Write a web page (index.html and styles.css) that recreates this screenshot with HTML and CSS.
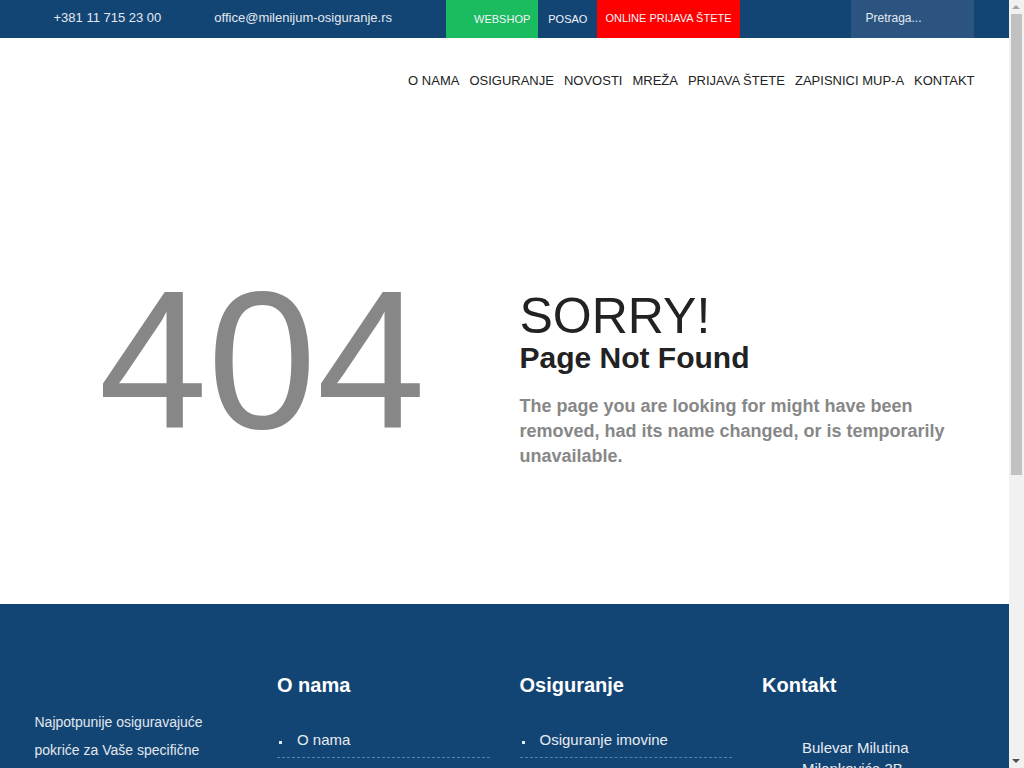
FILE: index.html
```
<!DOCTYPE html>
<html lang="sr">
<head>
<meta charset="utf-8">
<title>404 - Milenijum osiguranje</title>
<link rel="stylesheet" href="styles.css">
</head>
<body>
<div class="topbar">
  <div class="container topbar-inner">
    <span class="phone">+381 11 715 23 00</span>
    <span class="email">office@milenijum-osiguranje.rs</span>
    <a class="tb-btn webshop" href="#">WEBSHOP</a>
    <a class="tb-btn posao" href="#">POSAO</a>
    <a class="tb-btn prijava" href="#">ONLINE PRIJAVA ŠTETE</a>
    <div class="search">Pretraga...</div>
  </div>
</div>
<header class="header">
  <nav class="container nav">
    <a href="#">O NAMA</a>
    <a href="#">OSIGURANJE</a>
    <a href="#">NOVOSTI</a>
    <a href="#">MREŽA</a>
    <a href="#">PRIJAVA ŠTETE</a>
    <a href="#">ZAPISNICI MUP-A</a>
    <a href="#">KONTAKT</a>
  </nav>
</header>
<main class="container">
  <div class="error-row">
    <div class="col-half code">404</div>
    <div class="col-half message">
      <h1 class="sorry">SORRY!</h1>
      <h2 class="notfound">Page Not Found</h2>
      <p class="desc">The page you are looking for might have been removed, had its name changed, or is temporarily unavailable.</p>
    </div>
  </div>
</main>
<footer class="footer">
  <div class="container">
    <div class="footer-row">
      <div class="fcol about">
        <p>Najpotpunije osiguravajuće pokriće za Vaše specifične potrebe.</p>
      </div>
      <div class="fcol">
        <h3>O nama</h3>
        <ul class="flist">
          <li>O nama</li>
          <li>Menadžment</li>
          <li>Finansijski izveštaji</li>
          <li>Novosti</li>
          <li>Kontakt</li>
        </ul>
      </div>
      <div class="fcol">
        <h3>Osiguranje</h3>
        <ul class="flist">
          <li>Osiguranje imovine</li>
          <li>Osiguranje lica</li>
          <li>Osiguranje vozila</li>
          <li>Putno osiguranje</li>
          <li>Osiguranje useva</li>
        </ul>
      </div>
      <div class="fcol contact">
        <h3>Kontakt</h3>
        <p class="addr">Bulevar Milutina<br>Milankovića 3B<br>11070 Novi Beograd</p>
        <p class="addr">+381 11 715 23 00</p>
        <p class="addr">office@milenijum-<br>osiguranje.rs</p>
      </div>
    </div>
  </div>
  <div class="copyright">© Milenijum osiguranje. Sva prava zadržana.</div>
</footer>
<div class="scrollbar" aria-hidden="true">
  <div class="sb-up"></div>
  <div class="sb-thumb"></div>
  <div class="sb-down"></div>
</div>
</body>
</html>
```
FILE: styles.css
```
* { box-sizing: border-box; }
html, body { margin: 0; padding: 0; }
body {
  width: 1009px;
  font-family: "Liberation Sans", Arial, sans-serif;
  color: #222;
  background: #fff;
}
a { text-decoration: none; color: inherit; }
.container {
  width: 970px;
  margin: 0 auto;
  padding: 0 15px;
}

/* top bar */
.topbar { background: #134574; height: 38px; }
.topbar-inner {
  display: flex;
  align-items: stretch;
  height: 38px;
}
.phone, .email {
  font-size: 13px;
  color: #e4e9f0;
  line-height: 35px;
}
.phone { padding-left: 19px; }
.email { margin-left: 53px; margin-right: 54px; }
.tb-btn {
  font-size: 11px;
  color: #f2f4f8;
  line-height: 38px;
}
.webshop { background: #1bbb60; padding: 0 8px 0 28px; }
.posao { padding: 0 10px; }
.prijava { background: #ff0000; padding: 0 8px; line-height: 36px; }
.search {
  margin-left: auto;
  margin-right: 1px;
  width: 123px;
  background: #2b5580;
  color: #e4e9f0;
  font-size: 12px;
  line-height: 37px;
  padding-left: 15px;
}

/* header */
.header { height: 122px; }
.nav {
  display: flex;
  justify-content: flex-end;
  padding-top: 35px;
  font-size: 13px;
  line-height: 16px;
  color: #222;
}
.nav a { margin-left: 10px; }

/* 404 */
.error-row {
  display: flex;
  align-items: flex-start;
  margin: 0 -15px;
  padding-top: 103px;
  height: 444px;
}
.col-half { width: 50%; padding: 0 15px; }
.code {
  text-align: center;
  font-size: 196px;
  line-height: 196px;
  color: #878788;
}
.message { padding-top: 28px; }
.sorry {
  margin: 0;
  font-size: 50px;
  line-height: 50px;
  font-weight: normal;
  color: #222;
}
.notfound {
  margin: 0;
  font-size: 30px;
  line-height: 34px;
  font-weight: bold;
  color: #222;
}
.desc {
  margin: 19px 0 0;
  font-size: 18px;
  line-height: 25px;
  font-weight: bold;
  color: #878788;
}

/* footer */
.footer {
  background: #134574;
  color: #e6ebf1;
  padding-top: 69px;
}
.footer-row {
  display: flex;
  align-items: flex-start;
  margin: 0 -15px;
}
.fcol { width: 25%; padding: 0 15px; }
.fcol h3 {
  margin: 0;
  font-size: 20px;
  line-height: 24px;
  font-weight: bold;
  color: #fff;
}
.about p {
  margin: 35px 0 0;
  font-size: 14px;
  line-height: 28px;
  padding-right: 20px;
  color: #e2e7ee;
}
.flist {
  list-style: none;
  margin: 33px 0 0;
  padding: 0;
}
.flist li {
  position: relative;
  font-size: 15px;
  line-height: 20px;
  padding: 0 0 7px 20px;
  margin-bottom: 9px;
  border-bottom: 1px dashed #5b7ea3;
}
.flist li::before {
  content: "";
  position: absolute;
  left: 2px;
  top: 11px;
  width: 3px;
  height: 3px;
  background: #e6ebf1;
}
.addr {
  margin: 40px 0 0;
  padding-left: 40px;
  font-size: 15px;
  line-height: 21px;
}
.addr + .addr { margin-top: 18px; }
.copyright {
  margin-top: 90px;
  padding: 22px 0 28px;
  text-align: center;
  font-size: 13px;
  color: #c9d3df;
  border-top: 1px solid #2b5580;
}

/* fake browser scrollbar */
.scrollbar {
  position: fixed;
  top: 0;
  right: 0;
  width: 15px;
  height: 100vh;
  background: #f1f1f1;
}
.sb-up, .sb-down {
  position: absolute;
  left: 3px;
  width: 0;
  height: 0;
  border-left: 4px solid transparent;
  border-right: 4px solid transparent;
}
.sb-up { top: 5px; border-bottom: 4px solid #a3a3a3; }
.sb-down { bottom: 5px; border-top: 4px solid #505050; }
.sb-thumb {
  position: absolute;
  top: 14px;
  left: 2px;
  width: 11px;
  height: 461px;
  background: #c1c1c1;
}
```
